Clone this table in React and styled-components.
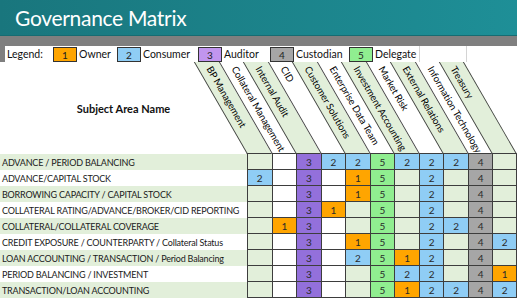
import React from "react";
import styled, { createGlobalStyle } from "styled-components";

const Global = createGlobalStyle`
  html, body { margin: 0; padding: 0; background: #fff; }
  body { width: 517px; height: 300px; overflow: hidden; font-family: Lato, "Open Sans", sans-serif; }
  * { box-sizing: border-box; }
`;

const COLORS = {
  1: "#ffa500",
  2: "#8fcdf5",
  3: "#9370db",
  4: "#a6a6a6",
  5: "#90ee90",
};
const LEGEND_COLORS = { ...COLORS, 3: "#c195ef" };
const LIGHT = "#e2efda";
const LINE = "#3d3d3d";

const Page = styled.div`
  width: 517px;
  height: 300px;
  display: flex;
  flex-direction: column;
`;

const TitleBar = styled.div`
  height: 36px;
  background: linear-gradient(to right, #19767d, #1e8f97);
  border-bottom: 1px solid #166c72;
  display: flex;
  align-items: center;
  padding-left: 15px;
`;

const Title = styled.h1`
  margin: 0;
  font-family: Lato, "Open Sans", sans-serif;
  font-weight: 400;
  font-size: 21px;
  color: #fff;
  letter-spacing: -0.3px;
`;

const LegendStrip = styled.div`
  background: #7f7f7f;
  padding: 10px 0 0 5px;
`;

const LegendRow = styled.div`
  height: 16px;
  background: #fff;
  display: flex;
  align-items: stretch;
  font-size: 10.5px;
  color: #111;
`;

const LegendLabel = styled.div`
  width: ${(p) => p.$w}px;
  display: flex;
  align-items: center;
  padding-left: ${(p) => p.$pad ?? 2}px;
  white-space: nowrap;
`;

const LegendBox = styled.div`
  width: 24px;
  height: 15px;
  margin-top: 1px;
  border: 1px solid #333;
  background: ${(p) => p.$bg};
  display: flex;
  align-items: center;
  justify-content: center;
  font-size: 10px;
  color: #222;
`;

const LegendSpacer = styled.div`
  width: ${(p) => p.$w}px;
  border-left: 1px solid #d4d4d4;
  flex: ${(p) => (p.$grow ? 1 : "none")};
`;

const Grid = styled.div`
  display: grid;
  grid-template-columns: 247px repeat(11, 1fr);
`;

const Header = styled(Grid)`
  height: 92px;
`;

const SubjectHead = styled.div`
  display: flex;
  align-items: center;
  justify-content: center;
  font-weight: 700;
  font-size: 11px;
  color: #111;
`;

const Band = styled.div`
  position: relative;
  overflow: hidden;
  background: ${(p) => (p.$shade ? LIGHT : "#fff")};
  border-left: 1px solid ${LINE};
  border-right: ${(p) => (p.$last ? `1px solid ${LINE}` : "none")};
  border-bottom: 1px solid ${LINE};
  transform-origin: 0 100%;
  transform: skewX(30deg);
`;

const BandText = styled.span`
  position: absolute;
  left: 50%;
  top: -2px;
  height: 12px;
  line-height: 12px;
  font-size: 9.7px;
  letter-spacing: -0.1px;
  color: #000;
  white-space: nowrap;
  transform-origin: 0 50%;
  transform: skewX(-30deg) rotate(60deg) translateX(1px);
`;

const Row = styled(Grid)`
  height: 16px;
`;

const RowLabel = styled.div`
  background: ${(p) => (p.$shade ? LIGHT : "#fff")};
  font-size: 9px;
  letter-spacing: -0.2px;
  color: #1a1a1a;
  display: flex;
  align-items: center;
  padding-left: 2px;
  white-space: nowrap;
  overflow: hidden;
`;

const Cell = styled.div`
  background: ${(p) => p.$bg};
  border-left: 1px solid ${LINE};
  border-right: ${(p) => (p.$last ? `1px solid ${LINE}` : "none")};
  border-bottom: 1px solid ${LINE};
  display: flex;
  align-items: center;
  justify-content: center;
  font-size: 10px;
  color: #2a2a2a;
`;

const columns = [
  "BP Management",
  "Collateral Management",
  "Internal Audit",
  "CID",
  "Customer Solutions",
  "Enterprise Data Team",
  "Investment Accounting",
  "Market Risk",
  "External Relations",
  "Information Technology",
  "Treasury",
];

const rows = [
  ["ADVANCE / PERIOD BALANCING", [0, 0, 3, 2, 2, 5, 2, 2, 2, 4, 0]],
  ["ADVANCE/CAPITAL STOCK", [2, 0, 3, 0, 1, 5, 0, 2, 0, 4, 0]],
  ["BORROWING CAPACITY / CAPITAL STOCK", [0, 0, 3, 0, 1, 5, 0, 2, 0, 4, 0]],
  ["COLLATERAL RATING/ADVANCE/BROKER/CID REPORTING", [0, 0, 3, 1, 0, 5, 0, 2, 0, 4, 0]],
  ["COLLATERAL/COLLATERAL COVERAGE", [0, 1, 3, 0, 0, 5, 0, 2, 2, 4, 0]],
  ["CREDIT EXPOSURE / COUNTERPARTY / Collateral Status", [0, 0, 3, 0, 1, 5, 0, 2, 0, 4, 2]],
  ["LOAN ACCOUNTING / TRANSACTION / Period Balancing", [0, 0, 3, 0, 2, 5, 1, 2, 0, 4, 0]],
  ["PERIOD BALANCING / INVESTMENT", [0, 0, 3, 0, 0, 5, 2, 2, 0, 4, 1]],
  ["TRANSACTION/LOAN ACCOUNTING", [0, 0, 3, 0, 0, 5, 1, 2, 2, 4, 2]],
];

const legend = [
  { n: 1, label: "Owner", w: 40 },
  { n: 2, label: "Consumer", w: 57 },
  { n: 3, label: "Auditor", w: 48 },
  { n: 4, label: "Custodian", w: 55 },
  { n: 5, label: "Delegate", w: 46 },
];

export default function App() {
  return (
    <Page>
      <Global />
      <TitleBar>
        <Title>Governance Matrix</Title>
      </TitleBar>
      <LegendStrip>
        <LegendRow>
          <LegendLabel $w={48}>Legend:</LegendLabel>
          {legend.map((l) => (
            <React.Fragment key={l.n}>
              <LegendBox $bg={LEGEND_COLORS[l.n]}>{l.n}</LegendBox>
              <LegendLabel $w={l.w} $pad={2}>{l.label}</LegendLabel>
            </React.Fragment>
          ))}
          <LegendSpacer $w={47} />
          <LegendSpacer $grow />
        </LegendRow>
      </LegendStrip>
      <Header>
        <SubjectHead>Subject Area Name</SubjectHead>
        {columns.map((c, i) => (
          <Band key={c} $shade={i % 2 === 0} $last={i === columns.length - 1}>
            <BandText>{c}</BandText>
          </Band>
        ))}
      </Header>
      {rows.map(([label, vals], r) => (
        <Row key={label}>
          <RowLabel $shade={r % 2 === 0}>{label}</RowLabel>
          {vals.map((v, i) => (
            <Cell
              key={i}
              $last={i === vals.length - 1}
              $bg={v ? COLORS[v] : i % 2 === 0 ? LIGHT : "#fff"}
            >
              {v || ""}
            </Cell>
          ))}
        </Row>
      ))}
    </Page>
  );
}
